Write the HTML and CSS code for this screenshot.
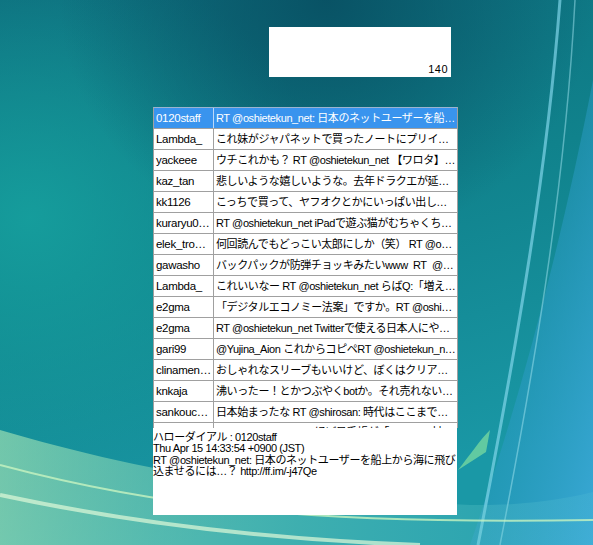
FILE: index.html
```html
<!DOCTYPE html>
<html lang="ja">
<head>
    <meta charset="UTF-8">
    <title>Timeline</title>
    <link rel="stylesheet" href="styles.css">
</head>
<body>
<div class="desktop">
    <!-- wallpaper sits behind everything -->
    <svg class="wallpaper" width="593" height="545" viewBox="0 0 593 545">
        <defs>
            <linearGradient id="base" x1="0" y1="0" x2="0.3" y2="1">
                <stop offset="0" stop-color="#0d6c7c"/>
                <stop offset="0.5" stop-color="#10828c"/>
                <stop offset="1" stop-color="#1a98a6"/>
            </linearGradient>
            <radialGradient id="glowLeft" cx="0.05" cy="0.4" r="0.5">
                <stop offset="0" stop-color="#16a09e" stop-opacity="0.9"/>
                <stop offset="1" stop-color="#16a09e" stop-opacity="0"/>
            </radialGradient>
            <radialGradient id="darkTop" cx="0.55" cy="0" r="0.45">
                <stop offset="0" stop-color="#084f62" stop-opacity="0.9"/>
                <stop offset="1" stop-color="#084f62" stop-opacity="0"/>
            </radialGradient>
            <linearGradient id="rightBlue" x1="0" y1="0" x2="1" y2="1">
                <stop offset="0" stop-color="#1a8cb0" stop-opacity="0"/>
                <stop offset="1" stop-color="#3aa8d6"/>
            </linearGradient>
            <linearGradient id="wave" x1="0" y1="0" x2="1" y2="0">
                <stop offset="0" stop-color="#b8f0b8" stop-opacity="0.95"/>
                <stop offset="0.5" stop-color="#7fd8c0" stop-opacity="0.6"/>
                <stop offset="1" stop-color="#5cc8d8" stop-opacity="0.3"/>
            </linearGradient>
        </defs>
        <rect width="593" height="545" fill="url(#base)"/>
        <rect width="593" height="545" fill="url(#glowLeft)"/>
        <rect width="593" height="545" fill="url(#darkTop)"/>
        <path d="M593 80 C560 250 520 400 470 545 L593 545 Z" fill="url(#rightBlue)"/>
        <path d="M560 0 C548 160 520 330 478 545" stroke="#7fd4e8" stroke-width="3" fill="none" opacity="0.7"/>
        <path d="M575 0 C566 170 540 340 500 545" stroke="#a0e4f0" stroke-width="1.5" fill="none" opacity="0.5"/>
        <path d="M0 430 C120 465 260 495 470 505 C520 506 560 500 593 492 L593 545 L0 545 Z" fill="url(#wave)" opacity="0.6"/>
        <path d="M0 465 C150 505 300 525 593 520" stroke="#c8f4c0" stroke-width="2" fill="none" opacity="0.8"/>
        <path d="M0 495 C140 525 280 540 420 545" stroke="#e0fad8" stroke-width="4" fill="none" opacity="0.7"/>
        <path d="M458 470 C470 455 480 440 490 430 L486 452 Z" fill="#80e0a0" opacity="0.7"/>
    </svg>

    <div class="composer">
        <span class="count">140</span>
    </div>

    <div class="timeline">
        <div class="row selected"><div class="name">0120staff</div><div class="text">RT @oshietekun_net: 日本のネットユーザーを船上から海に飛び込ませるには…？ http://ff.im/-j47Qe</div></div>
        <div class="row"><div class="name">Lambda_</div><div class="text">これ妹がジャパネットで買ったノートにプリインストールされてた</div></div>
        <div class="row"><div class="name">yackeee</div><div class="text">ウチこれかも？ RT @oshietekun_net 【ワロタ】ウィルス対策</div></div>
        <div class="row"><div class="name">kaz_tan</div><div class="text">悲しいような嬉しいような。去年ドラクエが延期されたときも</div></div>
        <div class="row"><div class="name">kk1126</div><div class="text">こっちで買って、ヤフオクとかにいっぱい出してる人いるよね</div></div>
        <div class="row"><div class="name">kuraryu0612</div><div class="text">RT @oshietekun_net iPadで遊ぶ猫がむちゃくちゃかわいい</div></div>
        <div class="row"><div class="name">elek_tronics</div><div class="text">何回読んでもどっこい太郎にしか（笑） RT @oshietekun_net</div></div>
        <div class="row"><div class="name">gawasho</div><div class="text">バックパックが防弾チョッキみたいwww&nbsp; RT&nbsp; @clinamen</div></div>
        <div class="row"><div class="name">Lambda_</div><div class="text">これいいなー RT @oshietekun_net らばQ:「増えすぎた</div></div>
        <div class="row"><div class="name">e2gma</div><div class="text">「デジタルエコノミー法案」ですか。RT @oshietekun_net</div></div>
        <div class="row"><div class="name">e2gma</div><div class="text">RT @oshietekun_net Twitterで使える日本人にやさしい</div></div>
        <div class="row"><div class="name">gari99</div><div class="text">@Yujina_Aion これからコピペRT @oshietekun_net 面白い</div></div>
        <div class="row"><div class="name">clinamen_jp</div><div class="text">おしゃれなスリーブもいいけど、ぼくはクリアファイル派です</div></div>
        <div class="row"><div class="name">knkaja</div><div class="text">沸いったー！とかつぶやくbotか。それ売れない。 RT @oshi</div></div>
        <div class="row"><div class="name">sankouchan</div><div class="text">日本始まったな RT @shirosan: 時代はここまできたか</div></div>
        <div class="row partial"><div class="name">hatahata</div><div class="text">RT @oshietekun_net ほぼ日手帳が「iPhone」対応に</div></div>
    </div>

    <div class="detail">
        ハローダイアル : 0120staff<br>
        Thu Apr 15 14:33:54 +0900 (JST)<br>
        RT @oshietekun_net: 日本のネットユーザーを船上から海に飛び込ませるには…？ http://ff.im/-j47Qe
    </div>
</div>
</body>
</html>
```

FILE: styles.css
```css
body {
    margin: 0;
    padding: 0;
    font-family: "Liberation Sans", "Noto Sans CJK JP", sans-serif;
    font-size: 12px;
    color: #000;
    overflow: hidden;
}

.desktop {
    position: relative;
    width: 593px;
    height: 545px;
    padding-top: 27px;
    box-sizing: border-box;
}

.wallpaper {
    position: absolute;
    top: 0;
    left: 0;
    z-index: 0;
}

.composer,
.timeline,
.detail {
    position: relative;
    z-index: 1;
}

/* tweet input box, only the counter shows */
.composer {
    margin-left: 269px;
    width: 182px;
    height: 50px;
    background-color: #fff;
    display: flex;
    justify-content: flex-end;
    align-items: flex-end;
    padding: 0 3px 1px 0;
    box-sizing: border-box;
}

.count {
    font-size: 11px;
    line-height: 13px;
    letter-spacing: 0.5px;
}

.timeline {
    margin: 30px 0 0 153px;
    width: 305px;
    height: 321px;
    overflow: hidden;
    background-color: #fff;
    border-top: 1px solid #9cb4d0;
    border-left: 1px solid #a0a0a0;
    border-right: 1px solid #a0a0a0;
    box-sizing: border-box;
}

.row {
    display: flex;
    height: 21px;
    border-bottom: 1px solid #a0a0a0;
    box-sizing: border-box;
}

.row .name {
    width: 56px;
    flex-shrink: 0;
    padding: 0 1px 0 2px;
    border-right: 1px solid #a0a0a0;
    font-size: 11.5px;
    letter-spacing: -0.3px;
}

.row .text {
    flex: 1;
    min-width: 0;
    padding: 0 1px 0 2px;
    font-size: 11px;
    letter-spacing: -0.4px;
}

.row .name,
.row .text {
    line-height: 20px;
    white-space: nowrap;
    overflow: hidden;
    text-overflow: ellipsis;
}

/* only the tops of the glyphs peek out above the detail pane */
.row.partial .name,
.row.partial .text {
    line-height: 18px;
}

.row.selected {
    background-color: #3994ee;
    color: #fff;
}

.row.selected .name {
    border-right-color: #bcd8f8;
}

.detail {
    margin-left: 153px;
    width: 304px;
    height: 87px;
    background-color: #fff;
    padding-top: 4px;
    box-sizing: border-box;
    font-size: 11px;
    letter-spacing: -0.4px;
    line-height: 11.3px;
    word-break: break-all;
}
```
